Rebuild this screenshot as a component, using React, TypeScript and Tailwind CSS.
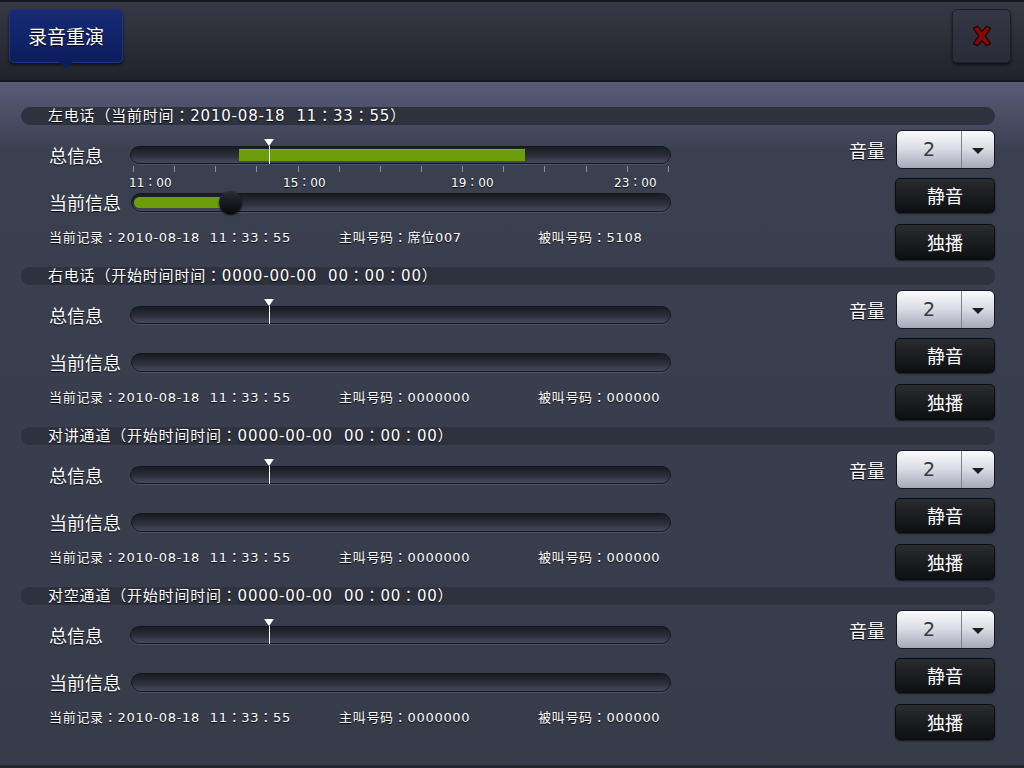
import React from "react";

const font = { fontFamily: '"DejaVu Sans", "Noto Sans CJK JP", "Noto Sans CJK SC", sans-serif' };
const cjk = { fontFamily: '"Noto Sans CJK SC", sans-serif' };

type Channel = {
  title: string;
  caller: string;
  callee: string;
  active?: boolean;
};

const channels: Channel[] = [
  { title: "左电话（当前时间：2010-08-18  11：33：55）", caller: "席位007", callee: "5108", active: true },
  { title: "右电话（开始时间时间：0000-00-00  00：00：00）", caller: "0000000", callee: "000000" },
  { title: "对讲通道（开始时间时间：0000-00-00  00：00：00）", caller: "0000000", callee: "000000" },
  { title: "对空通道（开始时间时间：0000-00-00  00：00：00）", caller: "0000000", callee: "000000" },
];

const shadow = "[text-shadow:0_1px_1px_rgba(0,0,0,0.9)]";

function Track({ children, h = 18 }: { children?: React.ReactNode; h?: number }) {
  return (
    <div
      className={`relative w-[541px] rounded-full border border-[#15171d] bg-gradient-to-b from-[#1a1c23] via-[#2a2d38] to-[#454a5c] shadow-[0_1px_0_rgba(120,126,150,0.35)] ${
        h === 18 ? "h-[18px]" : "h-[19px]"
      }`}
    >
      {children}
    </div>
  );
}

function Marker() {
  return (
    <div className="absolute left-[133px] top-[-8px] flex flex-col items-center">
      <div className="h-0 w-0 border-x-[5px] border-t-[7px] border-x-transparent border-t-white" />
      <div className="h-[18px] w-px bg-white" />
    </div>
  );
}

function Section({ c }: { c: Channel }) {
  return (
    <section className="h-[160px]">
      <div
        className={`ml-[21px] h-[18px] w-[974px] whitespace-pre rounded-full bg-[#2e313e] pl-[27px] text-[15px] leading-[18px] tracking-[0.8px] text-white ${shadow}`}
      >
        {c.title}
      </div>
      <div className="flex pl-[49px] pr-[29px]">
        <div className="w-[622px]">
          {/* total */}
          <div className="mt-[21px] flex items-center">
            <div className={`w-[81px] text-[18px] leading-[18px] text-white ${shadow}`} style={cjk}>总信息</div>
            <Track>
              {c.active && (
                <div className="absolute left-[108px] top-[2px] h-[12px] w-[286px] bg-[#6c9d0b] shadow-[inset_0_1px_0_rgba(255,255,255,0.15)]" />
              )}
              <Marker />
            </Track>
          </div>
          {/* axis */}
          <div className="relative ml-[81px] h-[29px] w-[541px]">
            {c.active && (
              <>
                <div className="flex justify-between pl-[3px] pr-[2px] pt-[2px]">
                  {Array.from({ length: 14 }).map((_, i) => (
                    <div key={i} className="h-[6px] w-px bg-[#8a8fa3]" />
                  ))}
                </div>
                <div className={`absolute left-[-1px] top-[12px] text-[12px] leading-[14px] text-white ${shadow}`}>11：00</div>
                <div className={`absolute left-[153px] top-[12px] text-[12px] leading-[14px] text-white ${shadow}`}>15：00</div>
                <div className={`absolute left-[321px] top-[12px] text-[12px] leading-[14px] text-white ${shadow}`}>19：00</div>
                <div className={`absolute left-[484px] top-[12px] text-[12px] leading-[14px] text-white ${shadow}`}>23：00</div>
              </>
            )}
          </div>
          {/* current */}
          <div className="flex items-center">
            <div className={`w-[82px] text-[18px] leading-[19px] text-white ${shadow}`} style={cjk}>当前信息</div>
            <Track h={19}>
              {c.active && (
                <>
                  <div className="absolute left-[2px] top-[3px] h-[11px] w-[98px] rounded-l-full bg-[#6c9d0b]" />
                  <div className="absolute left-[87px] top-[-3px] h-[23px] w-[23px] rounded-full bg-gradient-to-b from-[#2c2d33] to-[#08090b] shadow-[0_1px_2px_rgba(0,0,0,0.8)]" />
                </>
              )}
            </Track>
          </div>
          {/* info */}
          <div className={`mt-[18px] flex whitespace-pre text-[13px] leading-[16px] tracking-[0.7px] text-white ${shadow}`}>
            <div className="w-[290px]">当前记录：2010-08-18  11：33：55</div>
            <div className="w-[199px]">主叫号码：{c.caller}</div>
            <div>被叫号码：{c.callee}</div>
          </div>
        </div>
        <div className="ml-auto mt-[5px] flex w-[146px] flex-col items-end" style={cjk}>
          <div className="flex items-center">
            <div className={`mr-[11px] text-[18px] leading-[18px] text-white ${shadow}`}>音量</div>
            <div className="flex h-[39px] w-[99px] overflow-hidden rounded-[6px] border border-[#16171c] bg-gradient-to-b from-[#fbfbfd] via-[#d9dbe3] to-[#a4a8b9]">
              <div className="flex w-[64px] items-center justify-center text-[19px] text-[#34363d]" style={font}>2</div>
              <div className="w-px bg-[#7d8190]" />
              <div className="flex flex-1 items-center justify-center">
                <div className="mt-[2px] h-0 w-0 border-x-[6px] border-t-[6px] border-x-transparent border-t-[#1d1e22]" />
              </div>
            </div>
          </div>
          <button className="mt-[9px] flex h-[35px] w-[100px] items-center justify-center rounded-[5px] border border-[#0b0c0e] bg-gradient-to-b from-[#2b2c31] to-[#0e0f12] text-[18px] text-white shadow-[0_1px_2px_rgba(0,0,0,0.6)]">
            静音
          </button>
          <button className="mt-[11px] flex h-[36px] w-[100px] items-center justify-center rounded-[5px] border border-[#0b0c0e] bg-gradient-to-b from-[#2b2c31] to-[#0e0f12] text-[18px] text-white shadow-[0_1px_2px_rgba(0,0,0,0.6)]">
            独播
          </button>
        </div>
      </div>
    </section>
  );
}

export default function App() {
  return (
    <div className="flex h-[768px] w-[1024px] flex-col overflow-hidden bg-[#383d4c]" style={font}>
      <header className="flex h-[82px] items-start justify-between border-t-2 border-b-2 border-t-[#17181c] border-b-[#16171b] bg-gradient-to-b from-[#373a46] to-[#20232a] px-[9px] pt-[7px]">
        <div className="relative">
          <div
            className="flex h-[54px] w-[114px] items-center justify-center rounded-[5px] border border-[#1f3280] bg-gradient-to-b from-[#172a74] to-[#0c1d5e] text-[19px] text-white shadow-[0_2px_3px_rgba(0,0,0,0.6)] [text-shadow:0_1px_1px_rgba(0,0,0,0.9)]"
            style={cjk}
          >
            录音重演
          </div>
          <div className="absolute left-[50px] top-[53px] h-0 w-0 border-x-[7px] border-t-[7px] border-x-transparent border-t-[#0c1d5e]" />
        </div>
        <div className="mr-[4px] flex h-[54px] w-[59px] items-center justify-center rounded-[5px] border border-[#1c1e25] bg-gradient-to-b from-[#343744] to-[#2a2d38] shadow-[0_2px_3px_rgba(0,0,0,0.6)]">
          <svg width="24" height="22" viewBox="0 0 22 20">
            <path
              d="M3 3 L7 1 L11 6 L15 1 L19 3 L14 10 L19 17 L15 19 L11 14 L7 19 L3 17 L8 10 Z"
              fill="#8c0606"
              stroke="#1a0a0a"
              strokeWidth="1.2"
              strokeLinejoin="round"
            />
          </svg>
        </div>
      </header>
      <main className="flex-1 bg-gradient-to-b from-[#575d77] via-[#3b4051] via-[10%] to-[#373c4b] pt-[25px]">
        {channels.map((c, i) => (
          <Section key={i} c={c} />
        ))}
      </main>
      <div className="h-[3px] bg-[#24262d]" />
    </div>
  );
}
